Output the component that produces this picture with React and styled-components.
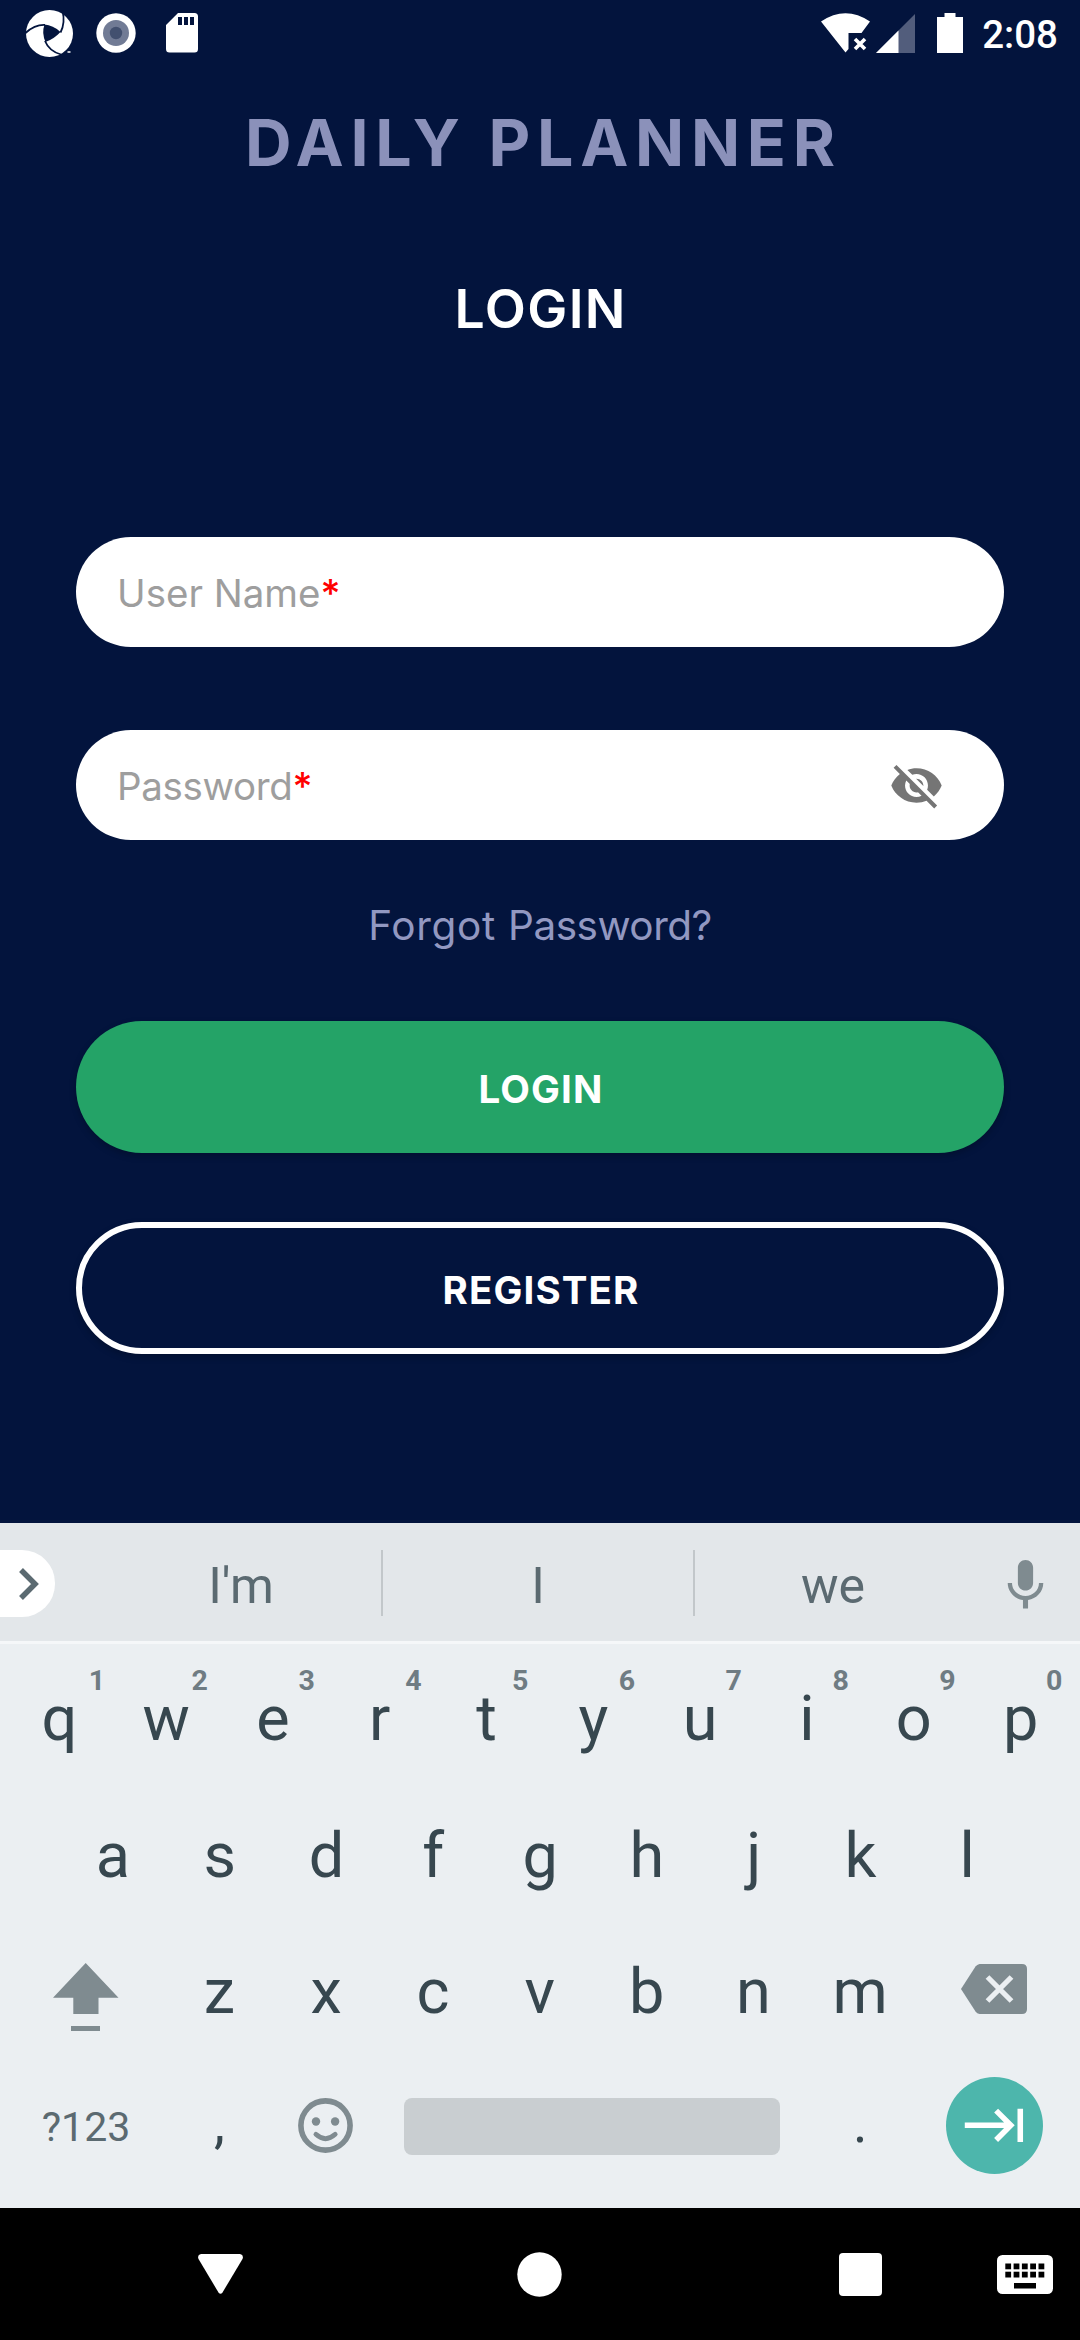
import React from "react";
import styled, { createGlobalStyle } from "styled-components";

const GlobalStyle = createGlobalStyle`
  * { box-sizing: border-box; }
  body { margin: 0; background: #03143d; }
`;

const Screen = styled.div`
  width: 1080px;
  height: 2340px;
  display: flex;
  flex-direction: column;
  background: #03143d;
  font-family: Inter, Roboto, sans-serif;
  overflow: hidden;
`;

const StatusBar = styled.header`
  height: 66px;
  padding: 0 22px 0 24px;
  display: flex;
  justify-content: space-between;
`;

const StatusGroup = styled.div`
  display: flex;
  align-items: center;
`;

const Glyph = styled.svg`
  display: block;
  flex: none;
  width: ${(p) => p.$w}px;
  height: ${(p) => p.$h}px;
  margin-left: ${(p) => p.$ml || 0}px;
`;

const Clock = styled.span`
  margin-left: 19px;
  padding-top: 3px;
  font: 500 38.5px/60px Roboto, sans-serif;
  color: #fff;
`;

const Content = styled.main`
  height: 1457px;
  padding: 37px 76px 0;
  display: flex;
  flex-direction: column;
  align-items: center;
`;

const AppTitle = styled.h1`
  margin: 0 -6.8px 0 0;
  font-size: 64.5px;
  line-height: 80px;
  font-weight: 700;
  letter-spacing: 6.7px;
  color: #8b91ba;
  white-space: nowrap;
`;

const PageTitle = styled.h2`
  margin: 94px -1.4px 0 0;
  font-size: 53.5px;
  line-height: 64px;
  font-weight: 600;
  letter-spacing: 1.4px;
  color: #fff;
`;

const Form = styled.form`
  width: 100%;
  margin-top: 196px;
  display: flex;
  flex-direction: column;
`;

const Fields = styled.div`
  display: flex;
  flex-direction: column;
  gap: 83px;
`;

const Field = styled.label`
  height: 110px;
  border-radius: 55px;
  background: #fff;
  padding: 0 60px 0 41px;
  display: flex;
  align-items: center;
  justify-content: space-between;
`;

const Placeholder = styled.span`
  padding-top: 2px;
  font-size: 38.5px;
  line-height: 48px;
  letter-spacing: ${(p) => p.$spacing || 0}px;
  color: #9e9e9e;
  white-space: nowrap;
`;

const Required = styled.span`
  font-weight: 500;
  color: #f00;
`;

const Forgot = styled.a`
  align-self: center;
  margin: 62px 0 71px;
  font-size: 40.5px;
  line-height: 48px;
  color: #9298c1;
  white-space: nowrap;
`;

const Word = styled.span`
  letter-spacing: ${(p) => p.$spacing}px;
`;

const Actions = styled.div`
  display: flex;
  flex-direction: column;
  gap: 69px;
`;

const Button = styled.button`
  height: 132px;
  border-radius: 66px;
  border: ${(p) => (p.$outline ? "6px solid #fff" : "0")};
  background: ${(p) => (p.$outline ? "#03143d" : "#24a367")};
  color: #fff;
  padding: 4px 0 0 2px;
  font: 700 38.5px/48px Inter, sans-serif;
  letter-spacing: 1.1px;
  box-shadow: 0 3px 7px rgba(0, 0, 0, 0.22);
`;

const Keyboard = styled.section`
  height: 685px;
  background: #ebeff2;
  font-family: Roboto, sans-serif;
`;

const Suggestions = styled.div`
  height: 121px;
  background: #e3e7ea;
  border-bottom: 3px solid #f5f7f9;
  display: grid;
  grid-template-columns: 55px 328px 312px 312px 73px;
  align-items: center;
  padding-top: 2px;
`;

const Expand = styled.div`
  width: 55px;
  height: 67px;
  margin-top: 1px;
  border-radius: 0 33px 33px 0;
  background: #fff;
  display: flex;
  align-items: center;
`;

const Suggestion = styled.div`
  height: 66px;
  padding: 0 ${(p) => p.$right || 0}px 0 ${(p) => p.$left || 0}px;
  border-right: ${(p) => (p.$divider ? "2px solid #c2c7ca" : "0")};
  font-size: 50px;
  line-height: 72px;
  text-align: center;
  color: #5b6a71;
`;

const Mic = styled.div`
  padding-top: 4px;
`;

const Keys = styled.div`
  padding-top: 3.75px;
`;

const Row = styled.div`
  height: 136.5px;
  padding: 0 0 0 ${(p) => p.$pad}px;
  display: flex;
`;

const Key = styled.div`
  position: relative;
  flex: none;
  width: ${(p) => p.$w || 106.8}px;
  height: 100%;
  padding-top: ${(p) => p.$down || 0}px;
  padding-bottom: ${(p) => p.$up || 0}px;
  display: flex;
  align-items: center;
  justify-content: center;
  font-size: ${(p) => p.$size || 63}px;
  color: ${(p) => p.$color || "#37474f"};
`;

const Hint = styled.span`
  position: absolute;
  top: 15px;
  left: ${(p) => (p.$narrow ? 76 : 72)}px;
  width: 30px;
  text-align: center;
  font-size: 28.5px;
  line-height: 36px;
  font-weight: 700;
  color: #6f7c83;
`;

const Space = styled.div`
  width: 376px;
  height: 57px;
  border-radius: 8px;
  background: #c9ced1;
`;

const Enter = styled.div`
  width: 97px;
  height: 97px;
  border-radius: 50%;
  background: #4db6ac;
  display: flex;
  align-items: center;
  justify-content: center;
`;

const NavBar = styled.nav`
  height: 132px;
  background: #000;
  display: flex;
  align-items: center;
`;

const top = ["q", "w", "e", "r", "t", "y", "u", "i", "o", "p"];
const middle = ["a", "s", "d", "f", "g", "h", "j", "k", "l"];
const bottom = ["z", "x", "c", "v", "b", "n", "m"];

const GREY = "#7f8b90";

export default function App() {
  return (
    <Screen>
      <GlobalStyle />
      <StatusBar>
        <StatusGroup>
          <Glyph $w={52} $h={66} viewBox="24 0 52 66">
            <circle cx="49.5" cy="33.5" r="23.5" fill="#fff" />
            <path d="M44.500 24.500Q53 25 60.500 32Q54 39 45.500 42Q41.500 33 44.500 24.500Z" fill="#03143d" />
            <path
              d="M60.500 32.500Q65.500 23 62.500 10.500M45 25Q35 24.500 25.500 33M45 41Q49 51 61 54.500"
              fill="none" stroke="#03143d" strokeWidth="1.800"
            />
            <path d="M67.500 52h3" stroke="#fff" strokeWidth="1.500" />
          </Glyph>
          <Glyph $w={40} $h={40} $ml={20} viewBox="0 0 40 40">
            <circle cx="20" cy="20" r="19.7" fill="#fff" />
            <circle cx="20" cy="20" r="13" fill="#717b95" />
            <circle cx="20" cy="20" r="6.2" fill="#42506f" />
          </Glyph>
          <Glyph $w={32} $h={39.5} $ml={30} viewBox="0 0 32 39.5">
            <path
              d="M12 0H28.500Q32 0 32 3.500V36Q32 39.500 28.500 39.500H3.500Q0 39.500 0 36V12ZM12 4v8h4V4ZM18 4v8h4V4ZM24 4v8h4V4Z"
              fill="#fff" fillRule="evenodd"
            />
          </Glyph>
        </StatusGroup>
        <StatusGroup>
          <Glyph $w={50} $h={40} viewBox="821 13 50 40">
            <path d="M821 21.500Q845.500 5 870 21.500L861.500 33H848.500V49L845.500 52.500Z" fill="#fff" />
            <path d="M855 39l10 10M865 39l-10 10" stroke="#fff" strokeWidth="3.600" />
          </Glyph>
          <Glyph $w={39} $h={39} $ml={4.5} viewBox="0 0 39 39">
            <path d="M39 0V39H0Z" fill="#525d7c" />
            <path d="M22.500 16.500V39H0Z" fill="#fff" />
          </Glyph>
          <Glyph $w={26} $h={40} $ml={22.5} viewBox="0 0 26 40">
            <path d="M7.500 0H18.500V4H26V40H0V4H7.500Z" fill="#fff" />
          </Glyph>
          <Clock>2:08</Clock>
        </StatusGroup>
      </StatusBar>

      <Content>
        <AppTitle>DAILY PLANNER</AppTitle>
        <PageTitle>LOGIN</PageTitle>
        <Form>
          <Fields>
            <Field>
              <Placeholder>User Name<Required>*</Required></Placeholder>
            </Field>
            <Field>
              <Placeholder $spacing={-0.35}>Password<Required>*</Required></Placeholder>
              <Glyph $w={55} $h={55} viewBox="0 0 24 24">
                <path
                  fill="#757575"
                  d="M12 7c2.760 0 5 2.240 5 5 0 .650-.130 1.260-.360 1.830l2.920 2.920c1.510-1.260 2.700-2.890 3.430-4.750-1.730-4.390-6-7.500-11-7.500-1.400 0-2.740.250-3.980.700l2.160 2.160C10.740 7.130 11.350 7 12 7zM2 4.270l2.280 2.280.460.460C3.080 8.300 1.780 10.020 1 12c1.730 4.390 6 7.500 11 7.500 1.550 0 3.030-.300 4.380-.840l.420.420L19.730 22 21 20.730 3.270 3 2 4.270zM7.530 9.800l1.550 1.550c-.050.210-.080.430-.080.650 0 1.660 1.340 3 3 3 .220 0 .440-.030.650-.080l1.550 1.550c-.670.330-1.410.530-2.200.530-2.760 0-5-2.240-5-5 0-.790.200-1.530.530-2.200zm4.310-.780l3.150 3.150.020-.160c0-1.660-1.340-3-3-3l-.170.010z"
                />
              </Glyph>
            </Field>
          </Fields>
          <Forgot>
            <Word $spacing={0.7}>Forgot </Word>
            <Word $spacing={-0.5}>Password?</Word>
          </Forgot>
          <Actions>
            <Button type="button">LOGIN</Button>
            <Button type="button" $outline>REGISTER</Button>
          </Actions>
        </Form>
      </Content>

      <Keyboard>
        <Suggestions>
          <Expand>
            <Glyph $w={22} $h={34} $ml={18} viewBox="0 0 22 34">
              <path d="M3 3L17 17L3 31" fill="none" stroke="#5b6a71" strokeWidth="5.500" />
            </Glyph>
          </Expand>
          <Suggestion $divider $left={46}>I'm</Suggestion>
          <Suggestion $divider>I</Suggestion>
          <Suggestion $right={36}>we</Suggestion>
          <Mic>
            <Glyph $w={61} $h={61} $ml={-12} viewBox="0 0 24 24">
              <path
                fill={GREY}
                d="M12 14c1.660 0 2.990-1.340 2.990-3L15 5c0-1.660-1.340-3-3-3S9 3.340 9 5v6c0 1.660 1.340 3 3 3zm5.300-3c0 3-2.540 5.100-5.300 5.100S6.700 14 6.700 11H5c0 3.410 2.720 6.230 6 6.720V21h2v-3.280c3.280-.480 6-3.300 6-6.720h-1.700z"
              />
            </Glyph>
          </Mic>
        </Suggestions>
        <Keys>
          <Row $pad={6}>
            {top.map((k, i) => (
              <Key key={k} $down={5}>
                {k}
                <Hint $narrow={i === 0}>{(i + 1) % 10}</Hint>
              </Key>
            ))}
          </Row>
          <Row $pad={59.5}>
            {middle.map((k) => <Key key={k} $down={5}>{k}</Key>)}
          </Row>
          <Row $pad={6}>
            <Key $w={160} $down={16}>
              <Glyph $w={66} $h={70} viewBox="53 1962 66 70">
                <path d="M85.700 1963L118.500 1997.700H98.500V2014H73.300V1997.700H53ZM71 2026H100V2031H71Z" fill={GREY} />
              </Glyph>
            </Key>
            {bottom.map((k) => <Key key={k} $down={5}>{k}</Key>)}
            <Key $w={160}>
              <Glyph $w={66} $h={50} viewBox="0 0 66 50">
                <path d="M18.500 0H61Q66 0 66 5V45Q66 50 61 50H18.500Q16 49.500 14.500 47.500L0 25L14.500 2.500Q16 .500 18.500 0Z" fill={GREY} />
                <path d="M26.500 13L50.500 37M50.500 13L26.500 37" stroke="#ebeff2" strokeWidth="5.300" />
              </Glyph>
            </Key>
          </Row>
          <Row $pad={6}>
            <Key $w={160} $size={41} $color="#5b6a71" $down={3}>?123</Key>
            <Key $size={55} $up={6}>,</Key>
            <Key $w={105}>
              <Glyph $w={55} $h={55} viewBox="-27.5 -27.5 55 55">
                <circle r="24.6" fill="none" stroke={GREY} strokeWidth="5.6" />
                <circle cx="-9.5" cy="-4" r="4.2" fill={GREY} />
                <circle cx="9.6" cy="-4" r="4.2" fill={GREY} />
                <path d="M-9.600 8.800Q0 17.500 9.700 8.800" fill="none" stroke={GREY} strokeWidth="4.800" strokeLinecap="round" />
              </Glyph>
            </Key>
            <Key $w={429} $down={2}><Space /></Key>
            <Key $size={55} $up={6}>.</Key>
            <Key $w={161}>
              <Enter>
                <Glyph $w={66.6} $h={66.6} $ml={2} viewBox="0 0 24 24">
                  <path fill="#fff" d="M11.590 7.410L15.170 11H1v2h14.170l-3.590 3.590L13 18l6-6-6-6-1.410 1.410zM20 6v12h2V6h-2z" />
                </Glyph>
              </Enter>
            </Key>
          </Row>
        </Keys>
      </Keyboard>

      <NavBar>
        <Glyph $w={45} $h={40} $ml={198} viewBox="0 0 45 40">
          <path d="M3 0H42Q46 1 44.500 5L24.500 38.500Q22.500 41 20.500 38.500L.500 5Q-1 1 3 0Z" fill="#fff" />
        </Glyph>
        <Glyph $w={45} $h={45} $ml={274} viewBox="0 0 45 45">
          <circle cx="22.5" cy="22.5" r="22.2" fill="#fff" />
        </Glyph>
        <Glyph $w={43} $h={43} $ml={277} viewBox="0 0 43 43">
          <rect width="43" height="43" rx="4" fill="#fff" />
        </Glyph>
        <Glyph $w={56} $h={39} $ml={115} viewBox="0 0 56 39">
          <rect width="56" height="39" rx="5.5" fill="#fff" />
          {[0, 1].map((r) =>
            [0, 1, 2, 3, 4].map((c) => (
              <rect key={`${r}${c}`} x={8.3 + c * 8.3} y={8.5 + r * 8.2} width="5.8" height="5.8" fill="#000" />
            ))
          )}
          <rect x="17" y="28" width="22" height="5.5" fill="#000" />
        </Glyph>
      </NavBar>
    </Screen>
  );
}
